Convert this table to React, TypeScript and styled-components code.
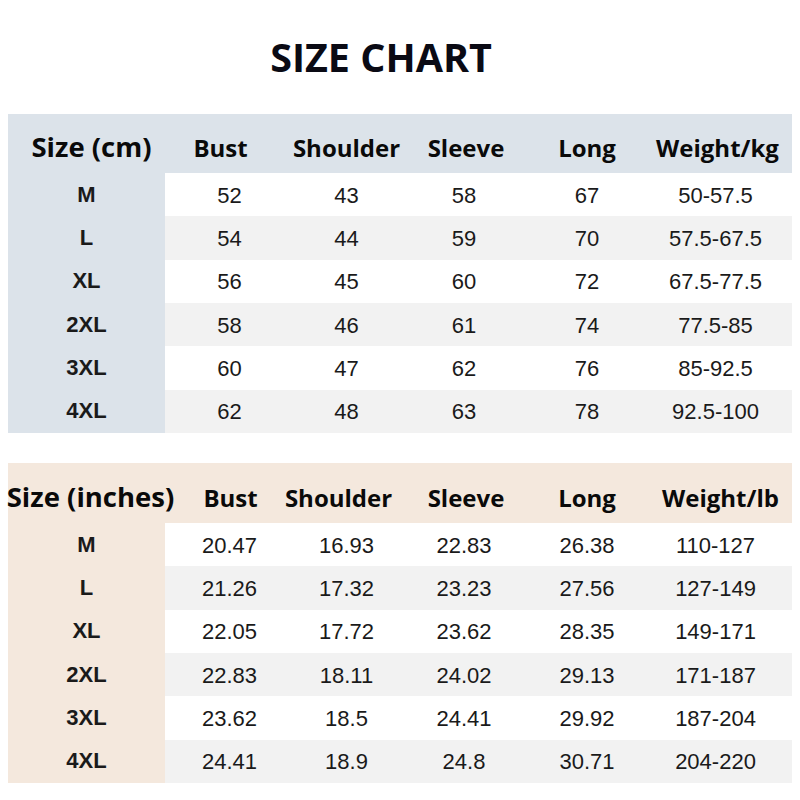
import React from "react";
import styled, { createGlobalStyle } from "styled-components";

const Global = createGlobalStyle`
  html, body { margin: 0; padding: 0; background: #ffffff; }
  * { box-sizing: border-box; }
`;

const Page = styled.div`
  width: 800px;
  height: 800px;
  background: #ffffff;
  display: flex;
  flex-direction: column;
  padding: 0 8px;
`;

const Title = styled.h1`
  margin: 0;
  height: 114px;
  padding: 29px 38px 0 0;
  text-align: center;
  font-family: "Open Sans", "Noto Sans", sans-serif;
  font-weight: 700;
  font-size: 39.5px;
  line-height: 56px;
  color: #0a0a14;
`;

const Table = styled.div<{ $accent: string; $headH: number }>`
  display: grid;
  grid-template-columns: 157px 123px 117px 120px 124px 143px;
  grid-template-rows: ${(p) => p.$headH}px repeat(6, 43.33px);
  width: 784px;
  --accent: ${(p) => p.$accent};
`;

const Gap = styled.div`
  height: 30px;
`;

const HeadCell = styled.div`
  background: var(--accent);
  display: flex;
  align-items: flex-end;
  justify-content: center;
  padding-bottom: 10px;
  white-space: nowrap;
  font-family: "Open Sans", "Noto Sans", sans-serif;
  font-weight: 700;
  color: #0a0a0a;
`;

const HeadText = styled.span<{ $shift?: number; $big?: boolean }>`
  display: inline-block;
  font-size: ${(p) => (p.$big ? "27.5px" : "24px")};
  line-height: 30px;
  transform: translate(${(p) => p.$shift ?? 0}px, ${(p) => (p.$big ? -1 : 0)}px);
`;

const SizeCell = styled.div`
  background: var(--accent);
  display: flex;
  align-items: center;
  justify-content: center;
  font-family: "Liberation Sans", Arial, sans-serif;
  font-weight: 700;
  font-size: 22px;
  color: #1a1a1a;
`;

const DataCell = styled.div<{ $alt: boolean }>`
  background: ${(p) => (p.$alt ? "#f2f2f2" : "#ffffff")};
  display: flex;
  align-items: center;
  justify-content: center;
  font-family: "Liberation Sans", Arial, sans-serif;
  font-size: 22px;
  color: #1a1a1a;
`;

const DataText = styled.span<{ $shift?: number }>`
  display: inline-block;
  transform: translate(${(p) => p.$shift ?? 0}px, 1px);
`;

type Chart = {
  accent: string;
  headH: number;
  headers: string[];
  headShift: number[];
  rows: string[][];
};

const sizes = ["M", "L", "XL", "2XL", "3XL", "4XL"];
const dataShift = [0, 3, 0, -1, 0, -5];

const charts: Chart[] = [
  {
    accent: "#dce3ea",
    headH: 59,
    headers: ["Size (cm)", "Bust", "Shoulder", "Sleeve", "Long", "Weight/kg"],
    headShift: [5, -6, 0, 1, 0, -3],
    rows: [
      ["52", "43", "58", "67", "50-57.5"],
      ["54", "44", "59", "70", "57.5-67.5"],
      ["56", "45", "60", "72", "67.5-77.5"],
      ["58", "46", "61", "74", "77.5-85"],
      ["60", "47", "62", "76", "85-92.5"],
      ["62", "48", "63", "78", "92.5-100"],
    ],
  },
  {
    accent: "#f4e8dd",
    headH: 60,
    headers: ["Size (inches)", "Bust", "Shoulder", "Sleeve", "Long", "Weight/lb"],
    headShift: [4, 4, -8, 1, 0, 0],
    rows: [
      ["20.47", "16.93", "22.83", "26.38", "110-127"],
      ["21.26", "17.32", "23.23", "27.56", "127-149"],
      ["22.05", "17.72", "23.62", "28.35", "149-171"],
      ["22.83", "18.11", "24.02", "29.13", "171-187"],
      ["23.62", "18.5", "24.41", "29.92", "187-204"],
      ["24.41", "18.9", "24.8", "30.71", "204-220"],
    ],
  },
];

function SizeTable({ chart }: { chart: Chart }) {
  return (
    <Table $accent={chart.accent} $headH={chart.headH}>
      {chart.headers.map((h, i) => (
        <HeadCell key={h}>
          <HeadText $shift={chart.headShift[i]} $big={i === 0}>
            {h}
          </HeadText>
        </HeadCell>
      ))}
      {chart.rows.map((row, r) => (
        <React.Fragment key={sizes[r]}>
          <SizeCell>{sizes[r]}</SizeCell>
          {row.map((v, c) => (
            <DataCell key={c} $alt={r % 2 === 1}>
              <DataText $shift={dataShift[c + 1]}>{v}</DataText>
            </DataCell>
          ))}
        </React.Fragment>
      ))}
    </Table>
  );
}

export default function App() {
  return (
    <>
      <Global />
      <Page>
        <Title>SIZE CHART</Title>
        <SizeTable chart={charts[0]} />
        <Gap />
        <SizeTable chart={charts[1]} />
      </Page>
    </>
  );
}
